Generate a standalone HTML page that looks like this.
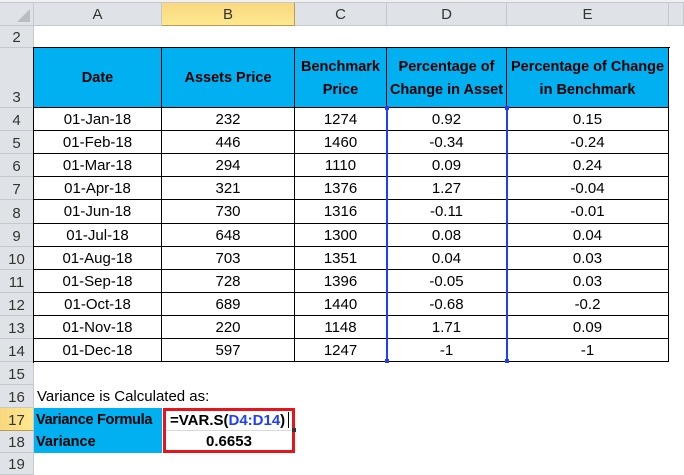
<!DOCTYPE html><html><head><style>
body{margin:0;width:684px;height:475px;overflow:hidden;background:#fff;font-family:"Liberation Sans",sans-serif;position:relative}
div{position:absolute;box-sizing:border-box;white-space:nowrap}
.h{background:#dfe3e8;border-right:1px solid #c5c9ce;border-bottom:1px solid #c5c9ce;color:#333;font-size:15px;display:flex;align-items:center;justify-content:center}
.rh{background:#dfe3e8;border-right:1px solid #c5c9ce;border-bottom:1px solid #c5c9ce;color:#333;font-size:15px;left:0;width:34px;display:flex;align-items:flex-end;justify-content:center;padding-bottom:1px}
.c{font-size:15px;display:flex;align-items:center;justify-content:center;color:#000}
.b{border-right:1px solid #000;border-bottom:1px solid #000}
.hd{background:#00b0f0;font-weight:bold;text-align:center;line-height:23px;font-size:14.5px;padding-top:2px}
</style></head><body>
<div style="left:0;top:0;width:684px;height:3px;background:#f0f0f0;border-bottom:1px solid #c5c9ce"></div>
<div class="h" style="left:0;top:3px;width:34px;height:23px"><div style="right:3px;bottom:3px;width:0;height:0;border-left:13px solid transparent;border-bottom:13px solid #b9bcc0"></div></div>
<div class="h" style="left:34px;top:3px;width:128px;height:23px">A</div>
<div class="h" style="left:162px;top:3px;width:133px;height:23px;background:linear-gradient(#f9d77e,#fde98f);border-color:#c29b4a">B</div>
<div class="h" style="left:295px;top:3px;width:92px;height:23px">C</div>
<div class="h" style="left:387px;top:3px;width:120px;height:23px">D</div>
<div class="h" style="left:507px;top:3px;width:162px;height:23px">E</div>
<div class="h" style="left:669px;top:3px;width:15px;height:23px"></div>
<div class="rh" style="top:26px;height:22px">2</div>
<div class="rh" style="top:48px;height:60px">3</div>
<div class="rh" style="top:108px;height:23px">4</div>
<div class="rh" style="top:131px;height:23px">5</div>
<div class="rh" style="top:154px;height:23px">6</div>
<div class="rh" style="top:177px;height:23px">7</div>
<div class="rh" style="top:200px;height:24px">8</div>
<div class="rh" style="top:224px;height:23px">9</div>
<div class="rh" style="top:247px;height:23px">10</div>
<div class="rh" style="top:270px;height:23px">11</div>
<div class="rh" style="top:293px;height:23px">12</div>
<div class="rh" style="top:316px;height:23px">13</div>
<div class="rh" style="top:339px;height:23px">14</div>
<div class="rh" style="top:362px;height:23px">15</div>
<div class="rh" style="top:385px;height:23px">16</div>
<div class="rh" style="top:408px;height:23px;background:linear-gradient(90deg,#f9d77e,#fde98f);border-bottom-color:#c29b4a">17</div>
<div class="rh" style="top:431px;height:22px">18</div>
<div class="rh" style="top:453px;height:22px">19</div>
<div style="left:33px;top:47px;width:637px;height:316px;border-top:1px solid #000;border-left:1px solid #000"></div>
<div class="c b hd" style="left:34px;top:48px;width:128px;height:60px">Date</div>
<div class="c b hd" style="left:162px;top:48px;width:133px;height:60px">Assets Price</div>
<div class="c b hd" style="left:295px;top:48px;width:92px;height:60px">Benchmark<br>Price</div>
<div class="c b hd" style="left:387px;top:48px;width:120px;height:60px">Percentage of<br>Change in Asset</div>
<div class="c b hd" style="left:507px;top:48px;width:162px;height:60px">Percentage of Change<br>in Benchmark</div>
<div class="c b" style="left:34px;top:108px;width:128px;height:23px">01-Jan-18</div><div class="c b" style="left:162px;top:108px;width:133px;height:23px">232</div><div class="c b" style="left:295px;top:108px;width:92px;height:23px">1274</div><div class="c b" style="left:387px;top:108px;width:120px;height:23px">0.92</div><div class="c b" style="left:507px;top:108px;width:162px;height:23px">0.15</div>
<div class="c b" style="left:34px;top:131px;width:128px;height:23px">01-Feb-18</div><div class="c b" style="left:162px;top:131px;width:133px;height:23px">446</div><div class="c b" style="left:295px;top:131px;width:92px;height:23px">1460</div><div class="c b" style="left:387px;top:131px;width:120px;height:23px">-0.34</div><div class="c b" style="left:507px;top:131px;width:162px;height:23px">-0.24</div>
<div class="c b" style="left:34px;top:154px;width:128px;height:23px">01-Mar-18</div><div class="c b" style="left:162px;top:154px;width:133px;height:23px">294</div><div class="c b" style="left:295px;top:154px;width:92px;height:23px">1110</div><div class="c b" style="left:387px;top:154px;width:120px;height:23px">0.09</div><div class="c b" style="left:507px;top:154px;width:162px;height:23px">0.24</div>
<div class="c b" style="left:34px;top:177px;width:128px;height:23px">01-Apr-18</div><div class="c b" style="left:162px;top:177px;width:133px;height:23px">321</div><div class="c b" style="left:295px;top:177px;width:92px;height:23px">1376</div><div class="c b" style="left:387px;top:177px;width:120px;height:23px">1.27</div><div class="c b" style="left:507px;top:177px;width:162px;height:23px">-0.04</div>
<div class="c b" style="left:34px;top:200px;width:128px;height:24px">01-Jun-18</div><div class="c b" style="left:162px;top:200px;width:133px;height:24px">730</div><div class="c b" style="left:295px;top:200px;width:92px;height:24px">1316</div><div class="c b" style="left:387px;top:200px;width:120px;height:24px">-0.11</div><div class="c b" style="left:507px;top:200px;width:162px;height:24px">-0.01</div>
<div class="c b" style="left:34px;top:224px;width:128px;height:23px">01-Jul-18</div><div class="c b" style="left:162px;top:224px;width:133px;height:23px">648</div><div class="c b" style="left:295px;top:224px;width:92px;height:23px">1300</div><div class="c b" style="left:387px;top:224px;width:120px;height:23px">0.08</div><div class="c b" style="left:507px;top:224px;width:162px;height:23px">0.04</div>
<div class="c b" style="left:34px;top:247px;width:128px;height:23px">01-Aug-18</div><div class="c b" style="left:162px;top:247px;width:133px;height:23px">703</div><div class="c b" style="left:295px;top:247px;width:92px;height:23px">1351</div><div class="c b" style="left:387px;top:247px;width:120px;height:23px">0.04</div><div class="c b" style="left:507px;top:247px;width:162px;height:23px">0.03</div>
<div class="c b" style="left:34px;top:270px;width:128px;height:23px">01-Sep-18</div><div class="c b" style="left:162px;top:270px;width:133px;height:23px">728</div><div class="c b" style="left:295px;top:270px;width:92px;height:23px">1396</div><div class="c b" style="left:387px;top:270px;width:120px;height:23px">-0.05</div><div class="c b" style="left:507px;top:270px;width:162px;height:23px">0.03</div>
<div class="c b" style="left:34px;top:293px;width:128px;height:23px">01-Oct-18</div><div class="c b" style="left:162px;top:293px;width:133px;height:23px">689</div><div class="c b" style="left:295px;top:293px;width:92px;height:23px">1440</div><div class="c b" style="left:387px;top:293px;width:120px;height:23px">-0.68</div><div class="c b" style="left:507px;top:293px;width:162px;height:23px">-0.2</div>
<div class="c b" style="left:34px;top:316px;width:128px;height:23px">01-Nov-18</div><div class="c b" style="left:162px;top:316px;width:133px;height:23px">220</div><div class="c b" style="left:295px;top:316px;width:92px;height:23px">1148</div><div class="c b" style="left:387px;top:316px;width:120px;height:23px">1.71</div><div class="c b" style="left:507px;top:316px;width:162px;height:23px">0.09</div>
<div class="c b" style="left:34px;top:339px;width:128px;height:23px">01-Dec-18</div><div class="c b" style="left:162px;top:339px;width:133px;height:23px">597</div><div class="c b" style="left:295px;top:339px;width:92px;height:23px">1247</div><div class="c b" style="left:387px;top:339px;width:120px;height:23px">-1</div><div class="c b" style="left:507px;top:339px;width:162px;height:23px">-1</div>
<div style="left:386px;top:107px;width:2px;height:255px;background:#1f3fff"></div>
<div style="left:506px;top:107px;width:2px;height:255px;background:#1f3fff"></div>
<div style="left:385px;top:106px;width:4px;height:4px;background:#1f3fff"></div>
<div style="left:505px;top:106px;width:4px;height:4px;background:#1f3fff"></div>
<div style="left:385px;top:359px;width:4px;height:4px;background:#1f3fff"></div>
<div style="left:505px;top:359px;width:4px;height:4px;background:#1f3fff"></div>
<div class="c" style="left:37px;top:385px;height:23px;justify-content:flex-start">Variance is Calculated as:</div>
<div class="c" style="left:34px;top:408px;width:128px;height:23px;background:#00b0f0;font-weight:bold;justify-content:flex-start;padding-left:2px;font-size:14.5px;letter-spacing:-0.3px;overflow:hidden">Variance Formula</div>
<div class="c" style="left:34px;top:431px;width:128px;height:22px;background:#00b0f0;font-weight:bold;justify-content:flex-start;padding-left:2px;font-size:14.5px">Variance</div>
<div style="left:163px;top:408px;width:132px;height:45px;border:3px solid #e8141c"></div>
<div style="left:166px;top:430px;width:126px;height:1px;background:#d9d9d9"></div>
<div class="c" style="left:170px;top:409px;height:22px;font-weight:bold;justify-content:flex-start">=VAR.S(<span style="color:#1f3fff">D4:D14</span>)<span style="display:inline-block;width:1px;height:16px;background:#000;margin-left:3px"></span></div>
<div class="c" style="left:166px;top:431px;width:126px;height:21px;font-weight:bold">0.6653</div>
<div style="left:292px;top:428px;width:4px;height:4px;background:#333"></div>
</body></html>
